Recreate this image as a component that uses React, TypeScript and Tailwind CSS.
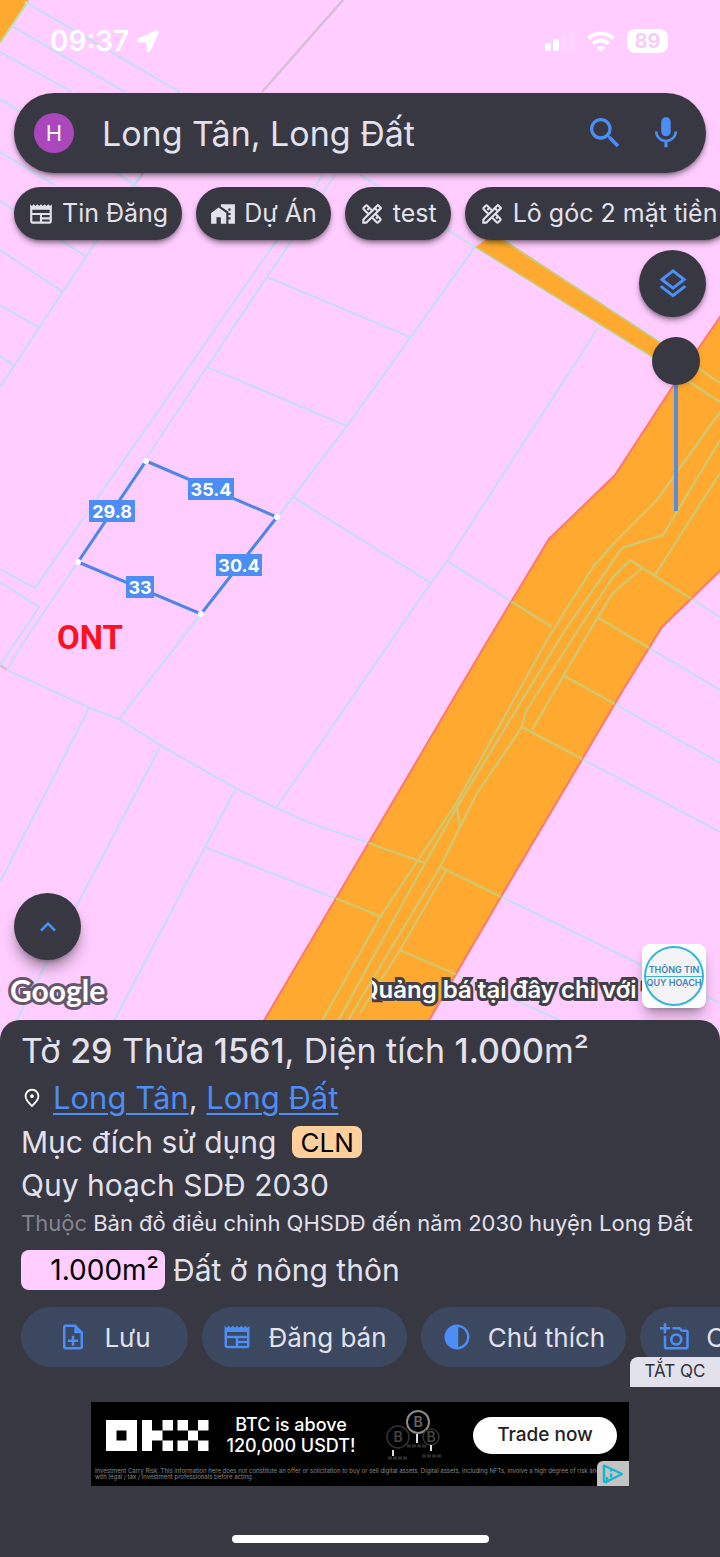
import React from "react";
import {
  MdContrast,
  MdHomeWork,
  MdKeyboardArrowUp,
  MdMic,
  MdNewspaper,
  MdOutlineAddAPhoto,
  MdOutlineDesignServices,
  MdOutlineLayers,
  MdOutlineNoteAdd,
  MdOutlinePlace,
  MdSearch,
} from "react-icons/md";
import { FaLocationArrow } from "react-icons/fa";

const parcelLines = [
  "M25 2 180 92", "M12 26 125 92", "M0 52 72 92", "M0 99 140 188", "M0 152 55 185",
  "M0 201 87 257", "M0 250 63 292", "M0 305 40 328", "M0 356 13 365", "M140 175 95 243 0 387",
  "M323 175 277 240 35 588 0 569", "M335 175 292 240 267 277 207 367 147 457 78 562 25 640 8 668",
  "M0 582 39 607 17 640 0 665", "M267 277 410 337", "M207 367 347 426",
  "M360 175 475 247 347 426 278 517 201 614 119 719", "M293 497 431 583",
  "M598 328 447 561 431 583 276 808", "M447 561 552 627",
  "M7 670 90 708 119 719 160 745 235 788 276 808 310 823 360 840 425 863",
  "M89 708 0 882", "M160 747 16 1021", "M235 790 205 847 114 1021", "M205 847 335 898 382 917",
  "M720 412 657 500 617 540 593 567 547 640 457 802 380 917 360 953 322 1021",
  "M720 440 663 535 622 548 565 630 457 807 425 863 377 950 338 1021",
  "M457 807 460 827 440 867 360 1000 348 1021",
  "M630 560 613 577 578 630 525 713 522 727 477 793 460 827",
  "M642 568 613 593 590 630 532 730", "M630 560 720 617", "M720 473 655 575",
  "M597 617 720 690", "M563 675 720 763", "M522 727 720 832", "M440 867 720 1003",
  "M447 869 400 950 360 1013", "M400 950 560 1020", "M475 247 652 357 720 402", "M503 240 657 340 720 383",
];

const highway = "M722 314 698 349 673 386 615 475 549 539 488 640 252 1041H417L502 895 623 690 662 627 722 569Z";
const sideRoad = "M475 247 487 239H503L657 340 720 383V402L652 357Z";

const measures = [
  { x: 211, y: 489, w: 46, label: "35.4" },
  { x: 112, y: 511, w: 46, label: "29.8" },
  { x: 239, y: 565, w: 46, label: "30.4" },
  { x: 140, y: 587, w: 28, label: "33" },
];

const corners = [[146, 461], [277, 517], [201, 614], [78, 562]];

function MapCanvas() {
  return (
    <svg
      viewBox="0 0 720 1040"
      preserveAspectRatio="xMinYMin slice"
      className="absolute inset-0 h-full w-full"
      role="img"
      aria-label="Bản đồ quy hoạch"
    >
      <defs>
        <clipPath id="roads">
          <path d={highway} />
          <path d={sideRoad} />
        </clipPath>
      </defs>
      <rect width="720" height="1040" fill="#ffcdff" />
      <path d="M0 0H29L0 43Z" fill="#ffa930" />
      <path d="M29 0 0 43" stroke="#b9e0a0" strokeWidth="2" />
      <path d="M343 0 262 92M147 168 133 186M0 665 7 670" stroke="#d6bed6" strokeWidth="2.5" />
      <g fill="none" stroke="#c9dcf6" strokeWidth="2.2">
        {parcelLines.map((d) => (
          <path key={d} d={d} />
        ))}
      </g>
      <path d={sideRoad} fill="#ffa930" />
      <path d={highway} fill="#ffa930" stroke="#ff7868" strokeWidth="2" />
      <path d="M660 343 700 350 722 375V400L660 358Z" fill="#ffa930" />
      <g fill="none" stroke="#cdca72" strokeWidth="2.2" clipPath="url(#roads)">
        {parcelLines.map((d) => (
          <path key={d} d={d} />
        ))}
      </g>
      <path d="M146 461 277 517 201 614 78 562Z" fill="none" stroke="#4c86e8" strokeWidth="3" />
      {corners.map(([x, y]) => (
        <circle key={x} cx={x} cy={y} r="3" fill="#fff" />
      ))}
      <g className="font-['Inter',sans-serif] text-[18px] font-bold" textAnchor="middle">
        {measures.map((m) => (
          <g key={m.label}>
            <rect x={m.x - m.w / 2} y={m.y - 11} width={m.w} height="22" fill="#4c8df6" />
            <text x={m.x} y={m.y + 7} fill="#fff">{m.label}</text>
          </g>
        ))}
      </g>
      <text
        x="90"
        y="649"
        textAnchor="middle"
        fill="#fb1222"
        className="font-['Roboto',sans-serif] text-[33px] font-bold"
      >
        ONT
      </text>
    </svg>
  );
}

function StatusBar() {
  return (
    <div className="flex h-[82px] items-center justify-between pr-[52px] pl-[50px] text-white">
      <div className="flex items-center gap-2">
        <span className="text-[28px] font-semibold">09:37</span>
        <FaLocationArrow className="size-[22px]" />
      </div>
      <div className="flex items-center gap-3">
        <svg viewBox="0 0 34 22" className="h-[22px] w-[34px]" fill="#fff">
          <rect x="4" y="13" width="6" height="8" rx="2" />
          <rect x="12" y="9" width="6" height="12" rx="2" />
          <rect x="20" y="5" width="6" height="16" rx="2" opacity=".15" />
          <rect x="28" y="1" width="6" height="20" rx="2" opacity=".15" />
        </svg>
        <svg viewBox="0 0 28 21" className="h-[21px] w-7" fill="none" stroke="#fff" strokeWidth="4">
          <path d="M1.5 7.5a18 18 0 0 1 25 0" />
          <path d="M6.2 12.6a11.4 11.4 0 0 1 15.6 0" />
          <path d="M14 21l-4.2-4.4a6 6 0 0 1 8.4 0z" fill="#fff" stroke="none" />
        </svg>
        <span className="flex h-6 w-[41px] items-center justify-center rounded-lg bg-white text-[20px] font-bold text-[#f6cdf6]">
          89
        </span>
      </div>
    </div>
  );
}

const chips = [
  { icon: MdNewspaper, label: "Tin Đăng" },
  { icon: MdHomeWork, label: "Dự Án" },
  { icon: MdOutlineDesignServices, label: "test" },
  { icon: MdOutlineDesignServices, label: "Lô góc 2 mặt tiền" },
];

const actions = [
  { icon: MdOutlineNoteAdd, label: "Lưu", box: "w-[167px]" },
  { icon: MdNewspaper, label: "Đăng bán", box: "w-[205px]" },
  { icon: MdContrast, label: "Chú thích", box: "w-[205px]" },
  { icon: MdOutlineAddAPhoto, label: "Chụp ảnh", box: "w-[205px]" },
];

function BitcoinArt() {
  return (
    <svg viewBox="0 0 60 54" className="h-[54px] w-[60px] shrink-0" fill="none" aria-hidden="true">
      <circle cx="33" cy="14" r="11" stroke="#8a8a8a" strokeWidth="2" />
      <circle cx="13" cy="29" r="11" stroke="#333" strokeWidth="1.5" />
      <circle cx="46" cy="29" r="8" stroke="#333" strokeWidth="1.5" />
      <g fontSize="14" fontWeight="600" textAnchor="middle">
        <text x="33" y="19" fill="#666">B</text>
        <text x="13" y="34" fill="#444">B</text>
        <text x="46" y="34" fill="#444">B</text>
      </g>
      <path d="M32 26v9M8 42v6M46 37v6" stroke="#ddd" strokeWidth="2" />
      <path d="M22 38h20M3 50h20M37 48h20" stroke="#2c2c2c" strokeWidth="3" strokeDasharray="4 1" />
    </svg>
  );
}

function AdBanner() {
  return (
    <aside className="relative mx-auto mt-[35px] flex h-[84px] w-[538px] max-w-full flex-col overflow-hidden bg-black text-white">
      <div className="flex h-[66px] items-center pr-3 pl-[15px]">
        <svg viewBox="0 0 103 31" className="h-[31px] w-[103px] shrink-0" fill="#fff" role="img" aria-label="OKX">
          <path fillRule="evenodd" d="M0 0H31V31H0ZM10.5 10.5V20.5H20.5V10.5Z" />
          <path d="M36 0H46V10.5H56.500V20.500H46V31H36ZM56.500 0H67V10.500H56.500ZM56.500 20.500H67V31H56.500Z" />
          <path d="M71.500 0H82V10.500H71.500ZM92 0H102.500V10.500H92ZM82 10.500H92V20.500H82ZM71.500 20.500H82V31H71.500ZM92 20.500H102.500V31H92Z" />
        </svg>
        <p className="w-[160px] shrink-0 pl-1 text-center text-[18px] leading-[21px] font-medium">
          BTC is above
          <br />
          120,000 USDT!
        </p>
        <div className="flex flex-1 pl-4">
          <BitcoinArt />
        </div>
        <button type="button" className="h-[37px] w-[144px] rounded-full bg-white text-[19px] font-medium text-[#222]">
          Trade now
        </button>
      </div>
      <p className="pl-1 text-[6px] leading-[6px] whitespace-nowrap text-[#8a8a8a]">
        Investment Carry Risk. This information here does not constitute an offer or solicitation to buy or sell digital
        assets. Digital assets, including NFTs, involve a high degree of risk and can become worthless
        <br />
        with legal / tax / investment professionals before acting.
      </p>
      <button
        type="button"
        aria-label="Thông tin quảng cáo"
        className="absolute right-0 bottom-0 flex h-[25px] w-8 items-center justify-center rounded-tl-md bg-[#c4c4c4]"
      >
        <svg viewBox="0 0 22 20" className="h-5 w-[22px]" fill="none" stroke="#18b5cf" strokeWidth="2.4" strokeLinejoin="round">
          <path d="M5 18.500 2 17.500V1.500L20 10 5 17.500V13" />
          <path d="M9 6v1.500M9 9.500v4" />
        </svg>
      </button>
    </aside>
  );
}

export default function App() {
  return (
    <div className="flex min-h-screen flex-col overflow-hidden bg-[#ffcdff] font-['Inter','Noto_Sans',sans-serif] text-[#e2e1ec]">
      <main className="relative flex flex-1 flex-col pb-8">
        <MapCanvas />
        <div className="relative flex flex-1 flex-col">
          <StatusBar />
          <form className="mx-[14px] mt-[11px] flex h-20 items-center rounded-full bg-[#383842] pr-[21px] pl-5 shadow-md shadow-black/40">
            <button type="button" className="size-10 rounded-full bg-[#ab47bc] text-[22px] text-white">
              H
            </button>
            <input
              aria-label="Tìm kiếm"
              defaultValue="Long Tân, Long Đất"
              className="ml-7 min-w-0 flex-1 bg-transparent text-[34px] outline-none"
            />
            <button type="submit" aria-label="Tìm" className="mr-[22px] text-[#4c8df6]">
              <MdSearch className="size-10" />
            </button>
            <button type="button" aria-label="Giọng nói" className="text-[#4c8df6]">
              <MdMic className="size-[38px]" />
            </button>
          </form>

          <nav className="mt-[14px] flex gap-[14px] overflow-hidden pb-[10px] pl-[14px]">
            {chips.map(({ icon: Icon, label }) => (
              <button
                key={label}
                type="button"
                className="flex h-[53px] shrink-0 items-center gap-2 rounded-full bg-[#383842] px-[14px] text-[25px] whitespace-nowrap shadow-md shadow-black/40"
              >
                <Icon className="size-[26px]" />
                {label}
              </button>
            ))}
          </nav>

          <div className="flex flex-col items-end gap-5 pr-[14px]">
            <button
              type="button"
              aria-label="Lớp bản đồ"
              className="flex size-[67px] items-center justify-center rounded-full bg-[#383842] text-[#4c8df6] shadow-md shadow-black/40"
            >
              <MdOutlineLayers className="size-9" />
            </button>
            <input
              type="range"
              aria-label="Độ mờ"
              min={0}
              max={100}
              defaultValue={0}
              className="mr-[6px] h-[174px] w-12 appearance-none bg-[linear-gradient(#5b8cdc,#5b8cdc)] bg-[length:4px_100%] bg-center bg-no-repeat [writing-mode:vertical-lr] [&::-webkit-slider-thumb]:size-12 [&::-webkit-slider-thumb]:appearance-none [&::-webkit-slider-thumb]:rounded-full [&::-webkit-slider-thumb]:bg-[#383842] [&::-webkit-slider-thumb]:shadow-md"
            />
          </div>

          <div className="mt-auto flex items-end justify-between pr-[14px] pl-[10px]">
            <div className="flex flex-col gap-3">
              <button
                type="button"
                aria-label="Mở rộng"
                className="ml-1 flex size-[67px] items-center justify-center rounded-full bg-[#383842] text-[#4c8df6] shadow-lg shadow-black/40"
              >
                <MdKeyboardArrowUp className="size-8" />
              </button>
              <span className="font-['Lato',sans-serif] text-[30px] leading-9 font-bold text-white [-webkit-text-stroke:6px_#66566a] [paint-order:stroke_fill]">
                Google
              </span>
            </div>
            <div className="flex items-end">
              <div className="w-[270px] overflow-hidden">
                <p className="-ml-3 text-[24px] leading-9 font-semibold whitespace-nowrap text-white [-webkit-text-stroke:6px_#444049] [paint-order:stroke_fill]">
                  Quảng bá tại đây chỉ với 1
                </p>
              </div>
              <div className="flex size-16 items-center justify-center rounded-lg bg-white shadow-lg shadow-black/30">
                <div className="flex size-[60px] flex-col items-center justify-center rounded-full border-2 border-[#35b4d8] bg-[#f3f3f5] text-[9px] leading-[12px] font-semibold whitespace-nowrap text-[#3a83b8]">
                  <span>THÔNG TIN</span>
                  <span className="w-full border-t border-[#35b4d8] text-center">QUY HOẠCH</span>
                </div>
              </div>
            </div>
          </div>
        </div>
      </main>

      <section className="relative -mt-5 rounded-t-[20px] bg-[#383842] pt-2 pb-[14px]">
        <div className="px-[21px]">
          <h1 className="text-[34px] leading-[46px] font-normal whitespace-nowrap">
            Tờ <b className="font-medium">29</b> Thửa <b className="font-medium">1561</b>, Diện tích{" "}
            <b className="font-medium">1.000</b>m²
          </h1>
          <p className="flex h-12 items-center text-[31px]">
            <MdOutlinePlace className="mr-[10px] size-[22px] text-white" />
            <span>
              <a href="#long-tan" className="text-[#4c8df6] underline decoration-2 underline-offset-4">Long Tân</a>,{" "}
              <a href="#long-dat" className="text-[#4c8df6] underline decoration-2 underline-offset-4">Long Đất</a>
            </span>
          </p>
          <p className="flex h-10 items-center gap-4 text-[30px]">
            Mục đích sử dụng
            <span className="flex h-8 items-center rounded-lg bg-[#ffd09c] px-2 text-[26px] text-black">CLN</span>
          </p>
          <p className="text-[30px] leading-[46px]">Quy hoạch SDĐ 2030</p>
          <p className="text-[22px] leading-[30px] whitespace-nowrap">
            <span className="text-[#85858f]">Thuộc</span> Bản đồ điều chỉnh QHSDĐ đến năm 2030 huyện Long Đất
          </p>
          <p className="mt-3 flex h-10 items-center gap-2 text-[30px]">
            <span className="flex h-10 w-[144px] items-center justify-end rounded-lg bg-[#ffcdff] pr-[6px] text-[28px] text-black">
              1.000m²
            </span>
            Đất ở nông thôn
          </p>
        </div>

        <div className="mt-[17px] flex gap-[14px] overflow-hidden pl-[21px]">
          {actions.map(({ icon: Icon, label, box }) => (
            <button
              key={label}
              type="button"
              className={`flex h-[60px] shrink-0 items-center justify-center gap-4 rounded-full bg-[#3b4860] text-[26px] whitespace-nowrap ${box}`}
            >
              <Icon className="size-[30px] text-[#4c8df6]" />
              {label}
            </button>
          ))}
        </div>

        <button
          type="button"
          className="absolute top-[337px] right-0 h-[30px] w-[90px] rounded-tl-lg bg-[#e2e1ec] text-[17px] text-[#303038]"
        >
          TẮT QC
        </button>

        <AdBanner />
        <div className="mx-auto mt-[49px] h-2 w-[257px] rounded-full bg-white" />
      </section>
    </div>
  );
}
